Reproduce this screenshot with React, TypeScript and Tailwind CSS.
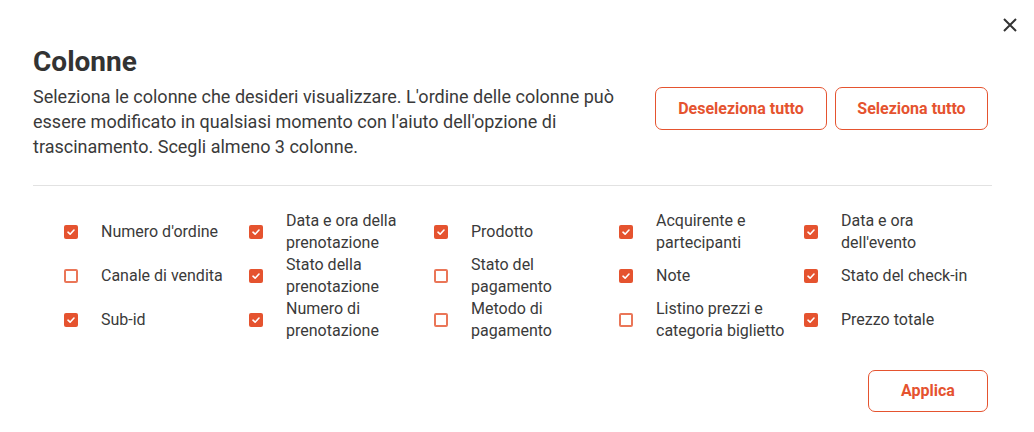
type Col = { label: string; checked: boolean }

const columns: Col[] = [
  { label: "Numero d'ordine", checked: true },
  { label: "Data e ora della prenotazione", checked: true },
  { label: "Prodotto", checked: true },
  { label: "Acquirente e partecipanti", checked: true },
  { label: "Data e ora dell'evento", checked: true },
  { label: "Canale di vendita", checked: false },
  { label: "Stato della prenotazione", checked: true },
  { label: "Stato del pagamento", checked: false },
  { label: "Note", checked: true },
  { label: "Stato del check-in", checked: true },
  { label: "Sub-id", checked: true },
  { label: "Numero di prenotazione", checked: true },
  { label: "Metodo di pagamento", checked: false },
  { label: "Listino prezzi e categoria biglietto", checked: false },
  { label: "Prezzo totale", checked: true },
]

const Checkbox = ({ checked }: { checked: boolean }) =>
  checked ? (
    <span className="flex h-[14px] w-[14px] shrink-0 items-center justify-center rounded-[2px] bg-[#e5532f]">
      <svg width="10" height="10" viewBox="0 0 10 10" fill="none">
        <path d="M2 5.2 4.1 7.2 8 3" stroke="white" strokeWidth="1.6" strokeLinecap="round" strokeLinejoin="round" />
      </svg>
    </span>
  ) : (
    <span className="h-[14px] w-[14px] shrink-0 rounded-[2px] border-2 border-[#ea7658] bg-white" />
  )

export default function App() {
  return (
    <div className="relative h-[432px] w-[1034px] bg-white pl-[33px] pr-[42px] text-[#333] font-['Roboto',sans-serif]">
      <button type="button" className="absolute left-[1003px] top-[18px] text-[#333]">
        <svg width="14" height="14" viewBox="0 0 14 14" fill="none">
          <path d="M1 1 13 13M13 1 1 13" stroke="#333" strokeWidth="2" />
        </svg>
      </button>

      <h2 className="pt-[45px] text-[28px] font-bold leading-[34px] text-[#333]">Colonne</h2>

      <div className="mt-[5px] flex items-start justify-between">
        <p className="w-[600px] text-[18px] leading-[25px] text-[#3a3a3a]">
          Seleziona le colonne che desideri visualizzare. L'ordine delle colonne può essere modificato in qualsiasi
          momento con l'aiuto dell'opzione di trascinamento. Scegli almeno 3 colonne.
        </p>
        <div className="mr-[4px] mt-[3px] flex gap-[8px]">
          <button type="button" className="h-[43px] w-[172px] rounded-[7px] border border-[#e5532f] text-[16px] font-bold text-[#e5532f]">
            Deseleziona tutto
          </button>
          <button type="button" className="h-[43px] w-[153px] rounded-[7px] border border-[#e5532f] text-[16px] font-bold text-[#e5532f]">
            Seleziona tutto
          </button>
        </div>
      </div>

      <hr className="mt-[26px] border-t border-[#e2e2e2]" />

      <div className="mt-[24px] grid grid-cols-[repeat(5,185px)] pl-[31px]">
        {columns.map((c) => (
          <label key={c.label} className="flex h-[44px] items-center gap-[23px]">
            <Checkbox checked={c.checked} />
            <span className="w-[134px] text-[16px] leading-[22px] text-[#3a3a3a]">{c.label}</span>
          </label>
        ))}
      </div>

      <div className="mt-[28px] flex justify-end pr-[4px]">
        <button type="button" className="h-[42px] w-[120px] rounded-[7px] border border-[#e5532f] text-[16px] font-bold text-[#e5532f]">
          Applica
        </button>
      </div>
    </div>
  )
}
